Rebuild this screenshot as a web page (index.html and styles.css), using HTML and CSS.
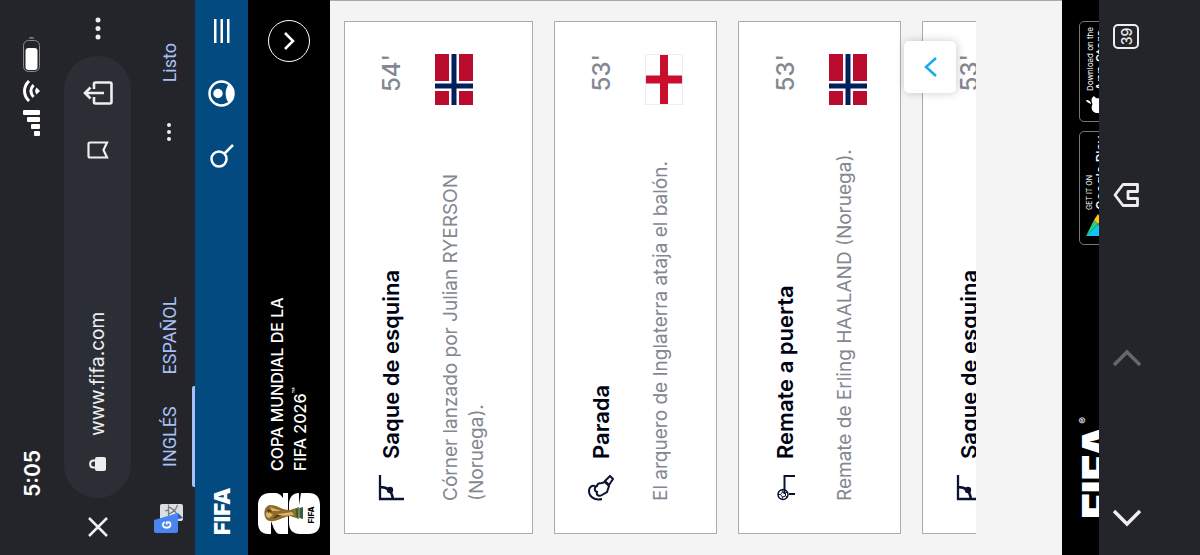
FILE: index.html
```html
<!DOCTYPE html>
<html lang="es">
<head>
<meta charset="UTF-8">
<meta name="viewport" content="width=device-width, initial-scale=1.0">
<title>Copa Mundial de la FIFA 2026</title>
<link rel="stylesheet" href="styles.css">
</head>
<body>

<!-- shared icons -->
<svg class="defs" aria-hidden="true">
  <symbol id="corner" viewBox="0 0 26 26">
    <path d="M26 2H2V26M14 2C14 10 10 14 2 15" fill="none" stroke="#0a1432" stroke-width="2.300"/>
    <circle cx="11" cy="12" r="3.200" fill="#0a1432"/>
  </symbol>
  <symbol id="norway" viewBox="0 0 51 38">
    <path fill="#ba0c2f" d="M0 0H51V38H0Z"/>
    <path fill="#fff" d="M14 0H24V38H14ZM0 14H51V24H0Z"/>
    <path fill="#00205b" d="M16.500 0H21.500V38H16.500ZM0 16.500H51V21.500H0Z"/>
  </symbol>
  <symbol id="england" viewBox="0 0 51 38">
    <path fill="#fff" d="M0 0H51V38H0Z"/>
    <path fill="#c8102e" d="M21.500 0H29.500V38H21.500ZM0 15H51V23H0Z"/>
    <path fill="none" stroke="#ececec" d="M.5 .5H50.500V37.500H.5Z"/>
  </symbol>
</svg>

<div class="phone">

  <div class="status-bar">
    <span class="clock">5:05</span>
    <div class="status-icons">
      <svg width="26" height="18" viewBox="0 0 26 18" fill="#fff">
        <rect x="0" y="11" width="5" height="6" rx="1"/><rect x="7" y="8" width="5" height="9" rx="1"/>
        <rect x="14" y="4" width="5" height="13" rx="1"/><rect x="21" y="0" width="5" height="17" rx="1"/>
      </svg>
      <svg width="22" height="18" viewBox="0 0 22 18" fill="none" stroke="#fff" stroke-width="3">
        <path d="M1 6C7 0 15 0 21 6M5 10.500C9 7 13 7 17 10.500"/>
        <path d="M11 17L7.500 13.500C9.500 11.700 12.500 11.700 14.500 13.500Z" fill="#fff" stroke="none"/>
      </svg>
      <svg width="36" height="18" viewBox="0 0 36 18">
        <rect x=".5" y=".5" width="31" height="16" rx="5" fill="none" stroke="#8b8c90"/>
        <rect x="2" y="2.500" width="22" height="12" rx="3" fill="#fff"/>
        <path d="M33.500 5.500V11.500C35.500 10.500 35.500 6.500 33.500 5.500Z" fill="#8b8c90"/>
      </svg>
    </div>
  </div>

  <div class="browser-bar">
    <button class="icon-btn close" aria-label="Cerrar">
      <svg width="20" height="20" viewBox="0 0 20 20" fill="none" stroke="#eee" stroke-width="2.500"><path d="M1 1L19 19M19 1L1 19"/></svg>
    </button>
    <div class="url-pill">
      <svg width="14" height="18" viewBox="0 0 14 18">
        <rect x="0" y="6" width="14" height="11" rx="2" fill="#eee"/>
        <path d="M3.500 7V4.500C3.500 0 10.500 0 10.500 4.500V7" fill="none" stroke="#eee" stroke-width="2"/>
      </svg>
      <input class="url" type="text" value="www.fifa.com" aria-label="Dirección" readonly>
      <button class="icon-btn" aria-label="Guardar">
        <svg width="18" height="22" viewBox="0 0 18 22" fill="none" stroke="#eee" stroke-width="2.200"><path d="M1.500 20V3Q1.500 1.500 3 1.500H15Q16.500 1.500 16.500 3V20L9 16.500Z"/></svg>
      </button>
      <button class="icon-btn share" aria-label="Compartir">
        <svg width="24" height="30" viewBox="0 0 24 30" fill="none" stroke="#eee" stroke-width="2.600">
          <path d="M8 11H3Q1.500 11 1.500 12.500V27Q1.500 28.500 3 28.500H21Q22.500 28.500 22.500 27V12.500Q22.500 11 21 11H16"/>
          <path d="M12 21V3M6.500 7.500L12 2L17.500 7.500"/>
        </svg>
      </button>
    </div>
    <button class="icon-btn more" aria-label="Más">
      <svg width="24" height="6" viewBox="0 0 24 6" fill="#eee"><circle cx="3" cy="3" r="2.500"/><circle cx="11.500" cy="3" r="2.500"/><circle cx="20" cy="3" r="2.500"/></svg>
    </button>
  </div>

  <div class="translate-bar">
    <svg class="translate-icon" width="30" height="30" viewBox="0 0 30 30">
      <rect x="12" y="6" width="17" height="23" rx="2" fill="#dcdfe2"/>
      <text x="16" y="22" font-size="13" fill="#5f6b74" font-family="Noto Sans CJK SC, sans-serif">文</text>
      <path d="M14 24H20L15 29Z" fill="#3559b8"/>
      <path d="M2 0H13L20 24H2Q0 24 0 22V2Q0 0 2 0Z" fill="#4a84f0"/>
      <text x="4" y="17" font-size="12" font-weight="700" fill="#fff" font-family="Roboto, sans-serif">G</text>
    </svg>
    <button class="lang active">INGLÉS</button>
    <button class="lang">ESPAÑOL</button>
    <button class="icon-btn options" aria-label="Opciones">
      <svg width="18" height="4" viewBox="0 0 18 4" fill="#eee"><circle cx="2" cy="2" r="2"/><circle cx="9" cy="2" r="2"/><circle cx="16" cy="2" r="2"/></svg>
    </button>
    <button class="done">Listo</button>
  </div>

  <header class="site-header">
    <a class="fifa-logo" href="#">FIFA</a>
    <button class="icon-btn search" aria-label="Buscar">
      <svg width="24" height="24" viewBox="0 0 24 24" fill="none" stroke="#fff" stroke-width="2.500"><circle cx="9" cy="9" r="7.500"/><path d="M14.500 14.500L23 23"/></svg>
    </button>
    <button class="icon-btn user" aria-label="Cuenta">
      <svg width="27" height="27" viewBox="0 0 27 27">
        <circle cx="13.500" cy="13.500" r="12" fill="none" stroke="#fff" stroke-width="2.500"/>
        <circle cx="13.500" cy="10" r="4.700" fill="#fff"/>
        <path d="M4 21C9 16.500 18 16.500 23 21C18 27 9 27 4 21Z" fill="#fff"/>
      </svg>
    </button>
    <button class="icon-btn" aria-label="Menú">
      <svg width="24" height="18" viewBox="0 0 24 18" fill="#fff"><path d="M0 1H24V3.500H0ZM0 7.500H24V10H0ZM0 14H24V16.500H0Z"/></svg>
    </button>
  </header>

  <section class="tournament">
    <svg width="44" height="62" viewBox="0 0 44 62">
      <path fill="#fff" d="M12 0H30C38 0 42 5 42 12V16C42 21 40 23 37 25H42V30H1V22C1 19 3 18 6 16L14 13H1V10C1 4 5 0 12 0Z"/>
      <path fill="#fff" d="M12 31H30C38 31 42 35 42 41H30L42 43V51C42 58 38 62 30 62H12C5 62 1 58 1 51V42C1 35 5 31 12 31Z"/>
      <path fill="#8f6a2c" d="M14 12C14 5 29 4 30 12C30 20 25 23 25 32L28 41H16L19 32C18 24 13 19 14 12Z"/>
      <path fill="#d9b566" d="M17 11C18 7 24 7 23 11L20 15ZM24 14L28 12L24 23ZM19 21L21 20L23 34L20 36Z"/>
      <path fill="#5c3a17" d="M22 10L26 9L24 14ZM16 15L20 18L20 24Z"/>
      <path fill="#2d6444" d="M18 38H26L28 45H16Z"/>
      <path stroke="#c9a152" d="M17 41H27"/>
      <text x="11.500" y="56" font-size="8" font-weight="800" font-family="Inter, sans-serif">FIFA</text>
    </svg>
    <h1>COPA MUNDIAL DE LA<br>FIFA 2026<sup>™</sup></h1>
    <button class="expand" aria-label="Desplegar">
      <svg width="18" height="11" viewBox="0 0 18 11" fill="none" stroke="#fff" stroke-width="2.500"><path d="M1 1L9 9L17 1"/></svg>
    </button>
  </section>

  <main class="content">
    <div class="timeline">
      <article class="card">
        <div class="card-head">
          <svg width="26" height="26"><use href="#corner"/></svg>
          <h2>Saque de esquina</h2>
          <span class="minute">54'</span>
        </div>
        <div class="card-body">
          <p>Córner lanzado por Julian RYERSON (Noruega).</p>
          <svg class="flag" width="51" height="38"><use href="#norway"/></svg>
        </div>
      </article>

      <article class="card">
        <div class="card-head">
          <svg width="26" height="26" viewBox="0 0 26 26" fill="none" stroke="#0a1432" stroke-width="2">
            <path d="M2 14C0 6 5 1 10 1C14 1 16 4 15 7"/>
            <path d="M6 14C4 11 6 8 9 9C10 6 14 6 15 9C18 9 18 12 18 14L19 17L15 21L9 19Z"/>
            <path d="M20 17L25 22L22 25L16 21Z"/>
          </svg>
          <h2>Parada</h2>
          <span class="minute">53'</span>
        </div>
        <div class="card-body">
          <p>El arquero de Inglaterra ataja el balón.</p>
          <svg class="flag" width="51" height="38"><use href="#england"/></svg>
        </div>
      </article>

      <article class="card">
        <div class="card-head">
          <svg width="26" height="26" viewBox="0 0 26 26" fill="none" stroke="#0a1432">
            <path d="M7 12.500H25V23M7 17V23" stroke-width="2"/>
            <circle cx="6.500" cy="11" r="5" stroke-width="1.500"/>
            <path d="M6.500 8.500L9 10.500L8 13.500H5L4 10.500ZM6.500 8.500V6M9 10.500L11 10M8 13.500L9 15M5 13.500L4 15M4 10.500L2 10"/>
          </svg>
          <h2>Remate a puerta</h2>
          <span class="minute">53'</span>
        </div>
        <div class="card-body">
          <p>Remate de Erling HAALAND (Noruega).</p>
          <svg class="flag" width="51" height="38"><use href="#norway"/></svg>
        </div>
      </article>

      <article class="card">
        <div class="card-head">
          <svg width="26" height="26"><use href="#corner"/></svg>
          <h2>Saque de esquina</h2>
          <span class="minute">53'</span>
        </div>
      </article>
    </div>

    <button class="to-top" aria-label="Volver arriba">
      <svg width="20" height="13" viewBox="0 0 20 13" fill="none" stroke="#1aa9ee" stroke-width="2.500"><path d="M1 12L10 2L19 12"/></svg>
    </button>
  </main>

  <footer class="site-footer">
    <a class="footer-logo" href="#">FIFA<sup>®</sup></a>
    <a class="store google" href="#">
      <svg width="22" height="24" viewBox="0 0 22 24">
        <path d="M0 0L12 12L0 24Z" fill="#12c4f0"/><path d="M0 0L16 8L12 12Z" fill="#27d07c"/>
        <path d="M12 12L16 8L22 12L16 16Z" fill="#ffc61a"/><path d="M0 24L12 12L16 16Z" fill="#f0484d"/>
      </svg>
      <span class="store-text"><small>GET IT ON</small><b>Google Play</b></span>
    </a>
    <a class="store apple" href="#">
      <svg width="18" height="22" viewBox="0 0 18 22" fill="#fff">
        <path d="M9 5C10 1.500 12 0 13 0C13 3 11.500 5 9 5ZM9 6.500C11 5.500 15 4.500 17 8C13.500 10 14 14.500 18 16C16 21 14 22.500 9 21C5 22.500 0 18 0 12C0 6 5 4.500 9 6.500Z"/>
      </svg>
      <span class="store-text"><small>Download on the</small><b>App Store</b></span>
    </a>
  </footer>

  <nav class="bottom-bar">
    <button class="icon-btn" aria-label="Atrás">
      <svg width="18" height="28" viewBox="0 0 18 28" fill="none" stroke="#eee" stroke-width="3.500"><path d="M16 1L3 14L16 27"/></svg>
    </button>
    <button class="icon-btn" aria-label="Adelante" disabled>
      <svg width="18" height="28" viewBox="0 0 18 28" fill="none" stroke="#66676c" stroke-width="3.500"><path d="M2 1L15 14L2 27"/></svg>
    </button>
    <button class="icon-btn" aria-label="Inicio">
      <svg width="24" height="26" viewBox="0 0 24 26" fill="none" stroke="#eee" stroke-width="2.800" stroke-linejoin="round"><path d="M1.500 10L12 2L22.500 10V24.500H15.500V15H8.500V24.500H1.500Z"/></svg>
    </button>
    <button class="tabs" aria-label="Pestañas">39</button>
  </nav>

</div>
</body>
</html>
```
FILE: styles.css
```css
* {
  box-sizing: border-box;
}
html {
  overflow: hidden;
}
body {
  margin: 0;
  height: 100vh;
  overflow: hidden;
  background: #24252b;
  font-family: 'Inter', sans-serif;
}
.defs {
  display: none;
}
svg {
  display: block;
  flex: none;
}
button {
  font-family: inherit;
  border: 0;
  padding: 0;
  background: none;
  cursor: pointer;
}
a {
  color: inherit;
  text-decoration: none;
}

/* portrait screen turned on its side */
.phone {
  display: flex;
  flex-direction: column;
  width: 100vh;
  height: 100vw;
  overflow: hidden;
  transform-origin: 0 0;
  transform: translateY(100vh) rotate(-90deg);
  background: #24252b;
}

.status-bar {
  flex: none;
  display: flex;
  justify-content: space-between;
  align-items: center;
  height: 64px;
  padding: 0 36px 0 58px;
}
.clock {
  font-size: 21px;
  font-weight: 600;
  color: #fff;
}
.status-icons {
  display: flex;
  gap: 8px;
}

.browser-bar {
  flex: none;
  display: flex;
  align-items: center;
  height: 67px;
  padding: 0 16px 0 18px;
}
.url-pill {
  flex: 1;
  display: flex;
  align-items: center;
  min-width: 0;
  height: 100%;
  margin: 0 16px 0 19px;
  padding: 0 25px 0 27px;
  border-radius: 34px;
  background: #2c2e36;
}
.url {
  flex: 1;
  min-width: 0;
  margin-left: 21px;
  padding: 0;
  border: 0;
  outline: 0;
  background: none;
  font-family: 'Inter', sans-serif;
  font-size: 19px;
  color: #eee;
}
.share {
  margin-left: 36px;
}

.translate-bar {
  flex: none;
  display: flex;
  align-items: center;
  height: 64px;
  padding: 12px 43px 0 22px;
}
.translate-icon {
  margin-right: 16px;
}
.lang {
  position: relative;
  height: 52px;
  padding: 0 20px;
  font-family: 'Roboto', sans-serif;
  font-size: 18px;
  color: #a8c0f5;
}
.lang + .lang {
  padding: 0 12px;
}
.lang.active::after {
  content: '';
  position: absolute;
  left: 0;
  right: 0;
  bottom: 0;
  height: 3px;
  border-radius: 2px 2px 0 0;
  background: #a8c0f5;
}
.options {
  margin-left: auto;
}
.done {
  margin-left: 41px;
  font-family: 'Roboto', sans-serif;
  font-size: 18px;
  color: #a8c0f5;
}

.site-header {
  flex: none;
  display: flex;
  align-items: center;
  height: 53px;
  padding: 0 19px 0 20px;
  background: #034a80;
}
.fifa-logo {
  font-size: 22px;
  font-weight: 900;
  color: #fff;
}
.search {
  margin-left: auto;
}
.user {
  margin: 0 37px;
}

.tournament {
  flex: none;
  display: flex;
  align-items: center;
  height: 82px;
  padding: 0 20px;
  background: #000;
  color: #fff;
}
.tournament h1 {
  flex: 1;
  margin: 0 0 0 20px;
  font-size: 16px;
  line-height: 23px;
  font-weight: 500;
}
.tournament sup {
  font-size: 10px;
  line-height: 0;
}
.expand {
  display: flex;
  align-items: center;
  justify-content: center;
  width: 42px;
  height: 42px;
  border: 1px solid #fff;
  border-radius: 50%;
}

.content {
  flex: 1;
  min-height: 0;
  position: relative;
  padding: 14px 20px 86px 21px;
  border-right: 1px solid #a9a9a9;
  background: #f4f4f4;
}
.timeline {
  display: flex;
  flex-direction: column;
  gap: 21px;
  height: 100%;
  overflow: hidden;
}
.card {
  flex: none;
  padding: 32px;
  border: 1px solid #a8aab8;
  background: #fff;
}
.card-head {
  display: flex;
  align-items: center;
  height: 28px;
  color: #000314;
}
.card-head h2 {
  flex: 1;
  margin: 0 0 0 16px;
  font-size: 22px;
  font-weight: 600;
}
.minute {
  font-size: 24px;
  font-weight: 500;
  color: #83878f;
}
.card-body {
  display: flex;
  justify-content: space-between;
  margin-top: 30px;
}
.card-body p {
  max-width: 360px;
  margin: 0;
  padding: 3px 0 10px;
  font-size: 19px;
  line-height: 26px;
  color: #83878f;
}
.to-top {
  position: absolute;
  right: 40px;
  bottom: 106px;
  display: flex;
  align-items: center;
  justify-content: center;
  width: 52px;
  height: 52px;
  border-radius: 5px;
  background: #fff;
  box-shadow: 0 1px 10px rgba(0,0,50,0.2);
}

.site-footer {
  flex: none;
  display: flex;
  align-items: flex-start;
  height: 37px;
  padding: 17px 21px 0 36px;
  overflow: hidden;
  background: #000;
  color: #fff;
}
.footer-logo {
  flex: 1;
  font-size: 44px;
  line-height: 38px;
  font-weight: 900;
}
.footer-logo sup {
  font-size: 10px;
  font-weight: 400;
  vertical-align: top;
  line-height: 8px;
}
.store {
  display: flex;
  gap: 4px;
  height: 34px;
  padding: 6px 8px;
  border: 1px solid #777;
  border-radius: 5px;
}
.google {
  width: 114px;
}
.apple {
  width: 101px;
  margin-left: 9px;
}
.store-text {
  display: flex;
  flex-direction: column;
  white-space: nowrap;
}
.store small {
  font-size: 8px;
  line-height: 8px;
}
.google small {
  font-size: 7px;
}
.store b {
  font-size: 13px;
  line-height: 14px;
  font-weight: 500;
}

.bottom-bar {
  flex: none;
  display: flex;
  gap: 142px;
  align-items: flex-start;
  height: 101px;
  padding: 14px 24px 0 28px;
}
.tabs {
  width: 26px;
  height: 26px;
  margin-left: -8px;
  border: 2px solid #eee;
  border-radius: 5px;
  font-size: 14px;
  font-weight: 500;
  color: #eee;
}
```
